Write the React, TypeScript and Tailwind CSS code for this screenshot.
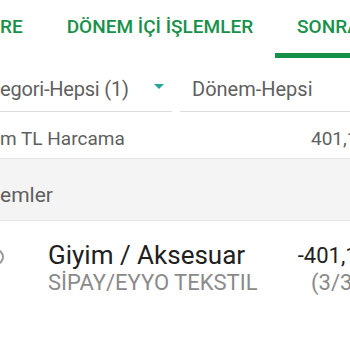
import React from 'react';

const App: React.FC = () => {
  return (
    <div
      className="w-[350px] h-[350px] overflow-hidden bg-white"
      style={{ fontFamily: 'Roboto, "Noto Sans", sans-serif' }}
    >
      {/* tabs */}
      <div className="flex h-[58px] whitespace-nowrap text-[19px] font-medium text-[#17914a]">
        <div className="pr-[22px] pt-[13px]">RE</div>
        <div className="px-[22px] pt-[13px]">DÖNEM İÇİ İŞLEMLER</div>
        <div className="px-[22px] pt-[13px] border-b-[5px] border-[#17914a] grow">SONRAKİ DÖNEM</div>
      </div>

      {/* filters */}
      <div className="flex h-[54px] whitespace-nowrap text-[20px] text-[#5f5f5f]">
        <div className="flex w-[172px] shrink-0 items-center border-b border-[#dcdcdc] pt-[9px]">
          <span className="tracking-[-0.2px]">egori-Hepsi (1)</span>
          <span className="ml-[25px] mb-[6px] h-0 w-0 border-x-[5px] border-t-[5px] border-x-transparent border-t-[#26a69a]" />
        </div>
        <div className="ml-[8px] flex grow items-center border-b border-[#dcdcdc] pl-[12px] pt-[9px]">
          Dönem-Hepsi
        </div>
      </div>

      {/* total */}
      <div className="flex h-[47px] items-center justify-between whitespace-nowrap border-b border-[#e3e3e3] pt-[9px] text-[19px] text-[#5f5f5f]">
        <span>m TL Harcama</span>
        <span className="-mr-[44px]">401,16 TL</span>
      </div>

      {/* section header */}
      <div className="flex h-[62px] items-center border-b border-[#e6e6e6] bg-[#f4f4f4] pt-[12px] text-[21px] text-[#5f5f5f]">
        emler
      </div>

      {/* item */}
      <div className="flex whitespace-nowrap pt-[19px]">
        <div className="-ml-[12px] mt-[9px] h-[16px] w-[16px] shrink-0 rounded-full border-2 border-[#9a9a9a]" />
        <div className="ml-[44px] flex grow flex-col">
          <span className="text-[26px] leading-[31px] text-[#212121]">Giyim / Aksesuar</span>
          <span className="text-[22px] leading-[24px] text-[#8a8a8a]">SİPAY/EYYO TEKSTIL</span>
        </div>
        <div className="-mr-[50px] flex flex-col items-end">
          <span className="text-[22px] leading-[31px] text-[#212121]">-401,16 TL</span>
          <span className="mr-[40px] text-[22px] leading-[24px] text-[#8a8a8a]">(3/3)</span>
        </div>
      </div>
    </div>
  );
};

export default App;
